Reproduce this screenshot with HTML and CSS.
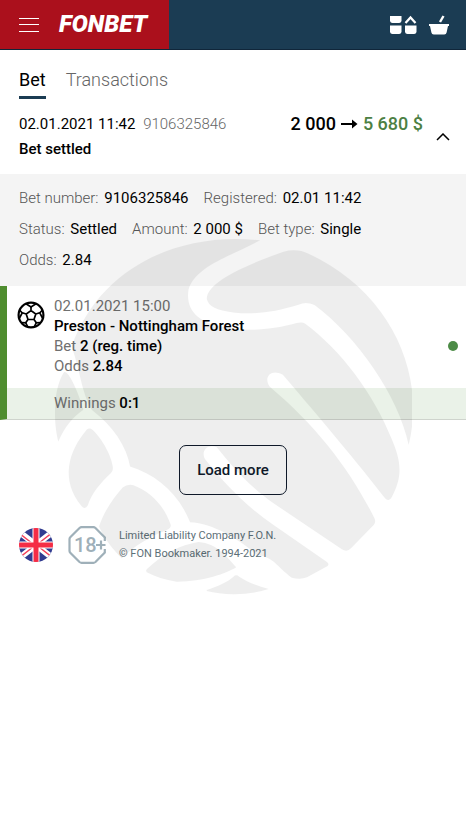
FILE: index.html
```html
<!DOCTYPE html>
<html lang="en">
<head>
    <meta charset="UTF-8">
    <meta name="viewport" content="width=device-width, initial-scale=1.0">
    <title>Fonbet</title>
    <link rel="stylesheet" href="styles.css">
</head>
<body>
    <!-- Top bar -->
    <header class="header">
        <div class="brand">
            <button class="icon-button menu" aria-label="Menu">
                <svg width="20" height="14" viewBox="0 0 20 14" stroke="#fff"><path d="M0 .5h20M0 6.500h20M0 13.500h20"/></svg>
            </button>
            <a class="logo" href="#">FONBET</a>
        </div>
        <div class="header-icons">
            <button class="icon-button" aria-label="Sections">
                <svg width="28" height="20" viewBox="0 0 28 20" fill="#fff">
                    <path d="M1 1h11.500v5a2.500 2.500 0 0 1-2.500 2H3.500A2.500 2.500 0 0 1 1 6zM1 10.500h11.500V17a2.500 2.500 0 0 1-2.500 2H3.500A2.500 2.500 0 0 1 1 17zM16 10.500h11.500V17a2.500 2.500 0 0 1-2.500 2h-6.500A2.500 2.500 0 0 1 16 17z"/>
                    <path d="M16.500 8L21.500 2.500l5 5.500" fill="none" stroke="#fff" stroke-width="2.200"/>
                </svg>
            </button>
            <button class="icon-button" aria-label="Coupon">
                <svg width="20" height="20" viewBox="0 0 20 20" fill="#fff">
                    <path d="M0 9h20v2h-1l-1.400 6.500a2.400 2.400 0 0 1-2.400 2H4.800a2.400 2.400 0 0 1-2.400-2L1 11H0z"/>
                    <path d="M11 7L14.500 1" fill="none" stroke="#fff" stroke-width="2.400"/>
                </svg>
            </button>
        </div>
    </header>

    <main>
        <nav class="tabs">
            <a class="tab active" href="#">Bet</a>
            <a class="tab" href="#">Transactions</a>
        </nav>

        <section class="summary">
            <div class="summary-info">
                <p>02.01.2021 11:42 <span class="summary-id">9106325846</span></p>
                <p class="bold">Bet settled</p>
            </div>
            <p class="summary-sum">
                2 000
                <svg width="17" height="12" viewBox="0 0 17 12" fill="none" stroke="#000" stroke-width="2"><path d="M0 6h14"/><path d="M11 1.500l5.500 4.500-5.500 4.500z" fill="#000" stroke="none"/></svg>
                <span class="win">5 680 $</span>
            </p>
            <button class="icon-button toggle" aria-label="Collapse">
                <svg width="14" height="8" viewBox="0 0 14 8" fill="none" stroke="#000" stroke-width="1.500"><path d="M1 7l6-6 6 6"/></svg>
            </button>
        </section>

        <dl class="details">
            <div><dt>Bet number:</dt> <dd>9106325846</dd></div>
            <div><dt>Registered:</dt> <dd>02.01 11:42</dd></div>
            <div><dt>Status:</dt> <dd>Settled</dd></div>
            <div><dt>Amount:</dt> <dd>2 000 $</dd></div>
            <div><dt>Bet type:</dt> <dd>Single</dd></div>
            <div><dt>Odds:</dt> <dd>2.84</dd></div>
        </dl>

        <article class="event">
            <div class="event-body">
                <svg class="ball" width="28" height="28" viewBox="0 0 28 28" fill="none" stroke="#000" stroke-width="1.700">
                    <circle cx="14" cy="14" r="12.400" stroke-width="2.200"/>
                    <path d="M14 9.500l4.800 3.500-1.800 5.500h-6L9.200 13zM14 9.500V6M18.800 13l4-1.200M17 18.500l2.300 3.300M11 18.500l-2.300 3.300M9.200 13l-4-1.200"/>
                    <path d="M9 2.800L14 6l5-3.200M25.500 9l-2.700 2.800L25.500 17M2.500 9l2.700 2.800L2.500 17M4.500 21.500l4.200.3 2.100 4M23.500 21.500l-4.200.3-2.100 4"/>
                </svg>
                <div class="event-text">
                    <p class="muted">02.01.2021 15:00</p>
                    <p class="bold">Preston - Nottingham Forest</p>
                    <p><span class="muted">Bet</span> <b>2 (reg. time)</b></p>
                    <p><span class="muted">Odds</span> <b>2.84</b></p>
                </div>
                <span class="dot"></span>
            </div>
            <p class="winnings"><span class="muted">Winnings</span> <b>0:1</b></p>
        </article>

        <button class="load-more">Load more</button>
    </main>

    <footer class="footer">
        <svg width="34" height="34" viewBox="0 0 34 34">
            <clipPath id="flag"><circle cx="17" cy="17" r="17"/></clipPath>
            <g clip-path="url(#flag)">
                <path fill="#323c90" d="M0 0h34v34H0z"/>
                <path stroke="#fff" stroke-width="6" d="M-2 2l38 30M36 2L-2 32"/>
                <path stroke="#f5405a" stroke-width="1.500" d="M0 5l14 11M20 19l14 11M34 4L20 15M14 19L0 30"/>
                <path stroke="#fff" stroke-width="7" d="M17 0v34M0 17h34"/>
                <path stroke="#f52c45" stroke-width="5" d="M17 0v34M0 17h34"/>
            </g>
        </svg>
        <svg class="age" width="38" height="38" viewBox="0 0 38 38" fill="none" stroke="#9fb0b9" stroke-width="2.200">
            <path d="M36.800 15v-3.500L27.500 2Q26.500 1.200 25.500 1.200h-12Q12.500 1.200 11.500 2L2.500 11Q1.500 12 1.500 13v12Q1.500 26 2.500 27l9 9Q12.500 36.800 13.500 36.800h12Q26.500 36.800 27.500 36l9.300-9.500V23"/>
            <text x="6" y="26">18</text>
            <path d="M28 19h9.500M33 14.500v9"/>
        </svg>
        <p class="legal">Limited Liability Company F.O.N.<br>© FON Bookmaker. 1994-2021</p>
    </footer>

    <!-- Ball mark laid over the page -->
    <svg class="watermark" viewBox="45 25 1070 1070" aria-hidden="true">
        <path d="M660 32C420 5 180 110 95 350C120 420 125 490 155 540C220 590 260 650 270 710C350 735 415 790 450 877C520 880 600 930 650 975C700 980 710 1010 755 1043Q780 1050 800 1042L862 1008Q868 1002 860 996L700 885C620 830 560 770 496 690C480 665 500 640 530 652C570 700 620 765 700 820L905 958Q920 968 932 955L1000 885Q1008 876 1002 864C930 720 830 590 688 470C668 440 695 415 728 435C800 520 930 670 1030 800Q1045 820 1054 802C1090 735 1080 690 1055 630C1000 490 900 360 795 282Q785 275 770 280C680 305 600 305 545 290C480 280 435 245 445 180C465 110 570 80 660 32Z"/>
        <path d="M500 208C500 150 650 95 730 66Q770 55 805 72C1040 180 1160 420 1105 645C1075 500 950 320 823 226Q797 214 775 225C700 248 640 255 580 248C530 242 505 230 500 208Z"/>
        <path d="M70 430C35 490 43 590 55 635C75 590 100 560 130 540C118 500 105 465 85 435Q75 422 70 430Z"/>
        <path d="M140 600C85 665 60 750 125 829Q135 840 143 827C155 790 180 760 212 730Q220 722 218 710C212 670 180 620 157 600Q148 592 140 600Z"/>
        <path d="M248 773C215 810 190 850 177 890C195 930 220 960 245 985C285 945 330 920 380 900Q397 892 390 880C370 825 330 785 280 766Q262 762 248 773Z"/>
        <path d="M320 1018C370 970 420 945 475 936C530 940 560 980 588 1012C560 1030 490 1055 410 1055C375 1050 345 1040 320 1027Q316 1022 320 1018Z"/>
        <path d="M500 1080C530 1070 565 1055 580 1040Q588 1032 597 1040C620 1055 650 1068 685 1077C625 1097 550 1096 500 1083Z"/>
    </svg>
</body>
</html>
```
FILE: styles.css
```css
* {
    box-sizing: border-box;
}

body {
    position: relative;
    min-height: 100vh;
    margin: 0;
    background-color: #fff;
    color: #000;
    font-family: Roboto, "Liberation Sans", sans-serif;
    font-size: 15px;
    line-height: 20px;
}

p, dl, dd {
    margin: 0;
}

a {
    color: inherit;
    text-decoration: none;
}

b, .bold {
    font-weight: 500;
}

button {
    font-family: inherit;
    cursor: pointer;
}

svg {
    display: block;
    flex-shrink: 0;
}

.icon-button {
    padding: 0;
    border: none;
    background: none;
}

.muted {
    color: #707070;
}

/* Header */
.header {
    display: flex;
    justify-content: space-between;
    height: 50px;
    background-color: #1b3c53;
    border-bottom: 1px solid #10263a;
}

.brand {
    display: flex;
    align-items: center;
    gap: 20px;
    padding: 0 22px 0 19px;
    background-color: #ab101c;
}

.logo {
    color: #fff;
    font-size: 24px;
    font-style: italic;
    font-weight: 900;
    line-height: 46px;
    padding-bottom: 2px;
}

.header-icons {
    display: flex;
    align-items: center;
    gap: 12px;
    padding-right: 17px;
}

/* Tabs */
.tabs {
    display: flex;
    gap: 20px;
    padding: 18px 19px 0;
    font-size: 18px;
    line-height: 24px;
}

.tab {
    padding-bottom: 4px;
    border-bottom: 3px solid transparent;
    color: #666;
    font-weight: 300;
}

.tab.active {
    border-color: #1b3c53;
    color: #000;
    font-weight: 400;
}

/* Bet summary */
.summary {
    display: flex;
    padding: 13px 16px 12px 19px;
}

.summary-info {
    flex: 1;
    line-height: 25px;
}

.summary-id {
    margin-left: 4px;
    color: #666;
    font-weight: 300;
}

.summary-sum {
    display: flex;
    align-items: center;
    gap: 5px;
    height: 24px;
    font-size: 18px;
    font-weight: 500;
}

.win {
    color: #4c8043;
}

.toggle {
    align-self: center;
    margin-left: 13px;
}

.details {
    display: flex;
    flex-wrap: wrap;
    row-gap: 11px;
    padding: 14px 19px 16px;
    background-color: #f4f4f4;
}

.details div {
    margin-right: 15px;
}

.details dt, .details dd {
    display: inline;
}

.details dt {
    color: #555;
    font-weight: 300;
}

.details dd {
    margin-left: 2px;
}

/* Event */
.event {
    border-left: 7px solid #4f8d2f;
    border-bottom: 1px solid #cfd4cd;
}

.event-body {
    display: flex;
    gap: 9px;
    padding: 10px 8px 12px 10px;
}

.ball {
    margin-top: 5px;
}

.event-text {
    flex: 1;
}

.dot {
    align-self: center;
    width: 10px;
    height: 10px;
    margin-top: 19px;
    border-radius: 50%;
    background-color: #4c8b46;
}

.winnings {
    padding: 5px 10px 6px 47px;
    background-color: #eaf2e8;
}

.load-more {
    display: block;
    height: 50px;
    margin: 25px auto 0;
    padding: 0 17px;
    border: 1px solid #0f1a2b;
    border-radius: 7px;
    background: none;
    color: #0f1a2b;
    font-size: 15px;
    font-weight: 500;
}

/* Footer */
.footer {
    display: flex;
    align-items: center;
    padding: 31px 19px 20px;
}

.age {
    margin: 0 13px 0 15px;
}

.age text {
    fill: #9fb0b9;
    stroke: none;
    font-size: 20px;
    font-weight: 500;
}

.legal {
    color: #5d7078;
    font-size: 11px;
    line-height: 18px;
}

.watermark {
    position: absolute;
    top: 238px;
    left: 50%;
    width: 357px;
    margin-left: -178px;
    opacity: 0.063;
    pointer-events: none;
}
```
